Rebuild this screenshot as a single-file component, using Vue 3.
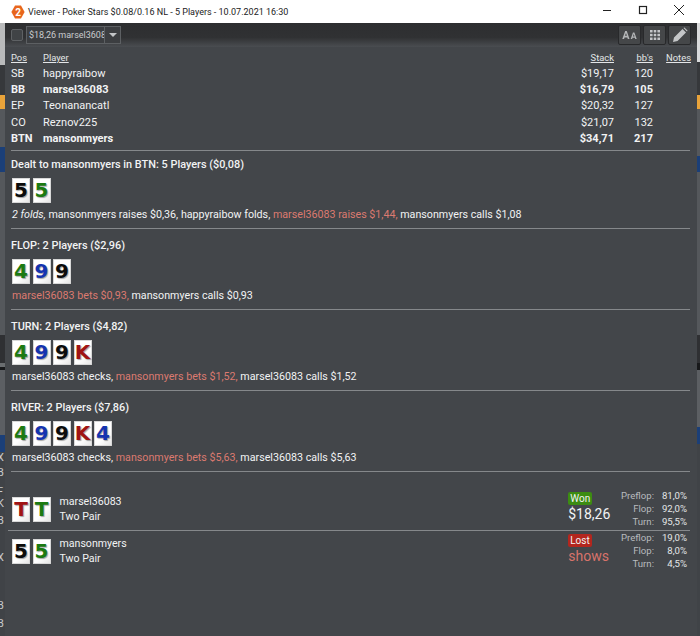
<template>
  <div class="screen">
    <header class="titlebar">
      <svg class="app-icon" width="14" height="14" viewBox="0 0 14 14">
        <path d="M4 .5h6L13.6 7 10 13.5H4L.4 7z" fill="#e8661c" />
        <text x="7" y="10.5" text-anchor="middle" class="app-icon-num">2</text>
      </svg>
      <span class="title">Viewer - Poker Stars $0.08/0.16 NL - 5 Players - 10.07.2021 16:30</span>
      <div class="win-controls">
        <svg width="36" height="12" viewBox="0 0 36 12"><path d="M14 6.500h8" stroke="#222" fill="none" /></svg>
        <svg width="36" height="12" viewBox="0 0 36 12"><rect x="14.500" y="2.500" width="7" height="7" stroke="#222" stroke-width="1.200" fill="none" /></svg>
        <svg width="36" height="12" viewBox="0 0 36 12"><path d="M13 1l10 10M23 1L13 11" stroke="#222" fill="none" /></svg>
      </div>
    </header>

    <div class="desk">
      <div class="strip strip-left">
        <div v-for="(b, i) in leftBands" :key="i" class="band" :style="{ height: b.h + 'px', background: b.c }">{{ b.t }}</div>
      </div>

      <main class="viewer">
        <div class="toolbar">
          <span class="check"></span>
          <div class="combo">
            <span class="combo-text">$18,26 marsel3608</span>
            <span class="combo-arrow"><i></i></span>
          </div>
          <div class="tools">
            <button class="tool">
              <svg width="15" height="8" viewBox="0 0 18 10"><path d="M0 10L3.600 0h2L9 10H6.900l-.6-2H2.800l-.6 2zM3.400 6h2.400L4.600 2.400zM10.500 10l2.800-8h1.800l2.900 8h-1.800l-.5-1.600h-2.900L12.300 10zM13.300 7h2L14.300 3.800z" fill="#b4b6b8" fill-rule="evenodd" /></svg>
            </button>
            <button class="tool">
              <svg width="10" height="10" viewBox="0 0 10 10" fill="#c4c6c8">
                <path d="M0 0h2.600v2.600H0zM3.700 0h2.600v2.600H3.700zM7.400 0H10v2.600H7.400zM0 3.700h2.600v2.600H0zM3.700 3.700h2.600v2.600H3.700zM7.400 3.700H10v2.600H7.400zM0 7.400h2.600V10H0zM3.700 7.400h2.600V10H3.700zM7.400 7.400H10V10H7.400z" />
              </svg>
            </button>
            <button class="tool">
              <svg width="16" height="16" viewBox="0 0 16 16"><path d="M1 15l1-4.500L10.500 2l3.500 3.500L5.500 14zM11.500 1l1-.5 3 3-.5 1z" fill="#c4c6c8" /></svg>
            </button>
          </div>
        </div>

        <div class="content">
          <div class="players">
            <div class="row head">
              <u>Pos</u><u>Player</u><u class="num">Stack</u><u class="num">bb's</u><u class="num">Notes</u>
            </div>
            <div v-for="p in players" :key="p.pos" class="row" :class="{ strong: p.strong }">
              <span>{{ p.pos }}</span><span>{{ p.name }}</span><span class="num">{{ p.stack }}</span><span class="num">{{ p.bb }}</span><span></span>
            </div>
          </div>

          <section v-for="s in streets" :key="s.title" class="street">
            <h3>{{ s.title }}</h3>
            <div class="cards">
              <span v-for="(c, i) in s.cards" :key="i" class="card" :class="c.s">{{ c.r }}</span>
            </div>
            <p class="actions">
              <template v-for="(a, i) in s.actions" :key="i"><span :class="a.k">{{ a.t }}</span>{{ ' ' }}</template>
            </p>
          </section>

          <div class="results">
            <div v-for="r in results" :key="r.name" class="result">
              <div class="cards">
                <span v-for="(c, i) in r.cards" :key="i" class="card" :class="c.s">{{ c.r }}</span>
              </div>
              <div class="who">
                <div>{{ r.name }}</div>
                <div>{{ r.hand }}</div>
              </div>
              <div class="outcome" :class="r.won ? 'won' : 'lost'">
                <span class="badge">{{ r.won ? 'Won' : 'Lost' }}</span>
                <span class="amount">{{ r.amount }}</span>
              </div>
              <div class="equity">
                <template v-for="e in r.equity" :key="e.l">
                  <span class="eq-label">{{ e.l }}:</span><span class="eq-val">{{ e.v }}</span>
                </template>
              </div>
            </div>
          </div>
        </div>
      </main>

      <div class="strip strip-right">
        <div v-for="(b, i) in rightBands" :key="i" class="band" :style="{ height: b.h + 'px', background: b.c }"></div>
      </div>
    </div>
  </div>
</template>

<script setup>
const card = (r, s) => ({ r, s })
const flop = [card('4', 'green'), card('9', 'blue'), card('9', 'black')]
const turn = [...flop, card('K', 'red')]
const river = [...turn, card('4', 'blue')]

const players = [
  { pos: 'SB', name: 'happyraibow', stack: '$19,17', bb: '120' },
  { pos: 'BB', name: 'marsel36083', stack: '$16,79', bb: '105', strong: true },
  { pos: 'EP', name: 'Teonanancatl', stack: '$20,32', bb: '127' },
  { pos: 'CO', name: 'Reznov225', stack: '$21,07', bb: '132' },
  { pos: 'BTN', name: 'mansonmyers', stack: '$34,71', bb: '217', strong: true },
]

const streets = [
  {
    title: 'Dealt to mansonmyers in BTN: 5 Players ($0,08)',
    cards: [card('5', 'black'), card('5', 'green')],
    actions: [
      { t: '2 folds,', k: 'folds' },
      { t: 'mansonmyers raises $0,36,' },
      { t: 'happyraibow folds,' },
      { t: 'marsel36083 raises $1,44,', k: 'hero' },
      { t: 'mansonmyers calls $1,08' },
    ],
  },
  {
    title: 'FLOP: 2 Players ($2,96)',
    cards: flop,
    actions: [
      { t: 'marsel36083 bets $0,93,', k: 'hero' },
      { t: 'mansonmyers calls $0,93' },
    ],
  },
  {
    title: 'TURN: 2 Players ($4,82)',
    cards: turn,
    actions: [
      { t: 'marsel36083 checks,' },
      { t: 'mansonmyers bets $1,52,', k: 'hero' },
      { t: 'marsel36083 calls $1,52' },
    ],
  },
  {
    title: 'RIVER: 2 Players ($7,86)',
    cards: river,
    actions: [
      { t: 'marsel36083 checks,' },
      { t: 'mansonmyers bets $5,63,', k: 'hero' },
      { t: 'marsel36083 calls $5,63' },
    ],
  },
]

const results = [
  {
    name: 'marsel36083',
    hand: 'Two Pair',
    won: true,
    amount: '$18,26',
    cards: [card('T', 'red'), card('T', 'green')],
    equity: [
      { l: 'Preflop', v: '81,0%' },
      { l: 'Flop', v: '92,0%' },
      { l: 'Turn', v: '95,5%' },
    ],
  },
  {
    name: 'mansonmyers',
    hand: 'Two Pair',
    won: false,
    amount: 'shows',
    cards: [card('5', 'black'), card('5', 'green')],
    equity: [
      { l: 'Preflop', v: '19,0%' },
      { l: 'Flop', v: '8,0%' },
      { l: 'Turn', v: '4,5%' },
    ],
  },
]

// what shows of the windows behind the viewer, top to bottom
const leftBands = [
  { h: 42, c: '#b9babb' },
  { h: 30, c: '#36383b' },
  { h: 14, c: '#e9a33a' },
  { h: 38, c: '#55585c' },
  { h: 25, c: '#1b3f78' },
  { h: 163, c: '#55585c' },
  { h: 28, c: '#2f3033' },
  { h: 4, c: '#6a6d70' },
  { h: 3, c: '#18191b' },
  { h: 65, c: '#5c5f63' },
  { h: 17, c: '#1b3f78' },
  { h: 15, c: '#404347', t: 'X' },
  { h: 19, c: '#404347', t: 'B' },
  { h: 12, c: '#404347', t: 'F' },
  { h: 17, c: '#404347', t: 'K' },
  { h: 37, c: '#404347', t: 'B' },
  { h: 48, c: '#404347', t: 'X' },
  { h: 18, c: '#404347', t: 'B' },
  { h: 18, c: '#404347', t: 'B' },
]

const rightBands = [
  { h: 39, c: '#d9dadb' },
  { h: 33, c: '#36383b' },
  { h: 14, c: '#e9a33a' },
  { h: 47, c: '#55585c' },
  { h: 16, c: '#1b3f78' },
  { h: 163, c: '#55585c' },
  { h: 28, c: '#2f3033' },
  { h: 7, c: '#18191b' },
  { h: 57, c: '#5c5f63' },
  { h: 17, c: '#1b3f78' },
  { h: 192, c: '#404347' },
]
</script>

<style scoped>
.screen {
  width: 700px;
  height: 636px;
  overflow: hidden;
  display: flex;
  flex-direction: column;
  font-family: Roboto, "Open Sans", sans-serif;
  font-size: 11px;
  color: #f2f3f4;
}

.titlebar {
  height: 23px;
  flex: none;
  background: #fff;
  color: #222;
  display: flex;
  align-items: center;
  padding-left: 11px;
  font-size: 9px;
}

.app-icon {
  margin-right: 3px;
}

.app-icon-num {
  font-size: 10px;
  font-weight: 700;
  fill: #fff;
}

.win-controls {
  margin-left: auto;
  margin-right: 3px;
  margin-bottom: 3px;
  display: flex;
}

.desk {
  flex: 1;
  display: flex;
  min-height: 0;
}

.strip {
  flex: none;
  overflow: hidden;
}

.strip-left {
  width: 5px;
}

.strip-right {
  width: 3px;
}

.band {
  font-size: 11px;
  line-height: 12px;
  color: #c8cacc;
  text-indent: -3px;
  overflow: hidden;
}

.viewer {
  flex: 1;
  min-width: 0;
  display: flex;
  flex-direction: column;
  background: #43464a;
}

.toolbar {
  height: 24px;
  flex: none;
  display: flex;
  align-items: center;
  padding: 0 6px;
  background: linear-gradient(#2d2e30, #303133 60%, #4a4d51);
}

.check {
  width: 10px;
  height: 10px;
  border: 1px solid #5e6164;
  border-radius: 2px;
  background: #404346;
}

.combo {
  margin-left: 3px;
  width: 95px;
  height: 18px;
  display: flex;
  border: 1px solid #5d6063;
  box-sizing: border-box;
  background: #3c3e41;
}

.combo-text {
  flex: 1;
  min-width: 0;
  overflow: hidden;
  white-space: nowrap;
  line-height: 16px;
  padding-left: 2px;
  font-size: 9px;
  color: #c9cbcd;
}

.combo-arrow {
  width: 15px;
  border-left: 1px solid #5d6063;
  display: flex;
  align-items: center;
  justify-content: center;
}

.combo-arrow i {
  border: 4px solid transparent;
  border-top: 4px solid #c4c6c8;
  border-bottom: 0;
}

.tools {
  margin-left: auto;
  display: flex;
  gap: 2px;
}

.tool {
  width: 23px;
  height: 20px;
  padding: 0;
  display: flex;
  align-items: center;
  justify-content: center;
  border: 1px solid #28292b;
  border-radius: 2px;
  background: #454749;
}

.content {
  flex: 1;
  padding: 3px 6px 0;
}

.players {
  padding-bottom: 3px;
}

.row {
  display: grid;
  grid-template-columns: 32px 1fr 60px 39px 38px;
  height: 16.2px;
  line-height: 16px;
  white-space: nowrap;
}

.row.head {
  font-size: 9.4px;
  height: 16px;
  line-height: 15px;
  color: #e4e6e8;
}

.row.strong {
  font-weight: 700;
}

.num {
  text-align: right;
}

.street {
  border-top: 1px solid #85888b;
  margin-right: 1px;
  height: 71px;
  padding-top: 9px;
}

.street:first-of-type {
  padding-top: 6px;
}

.street h3 {
  margin: 0;
  font-size: 10.9px;
  font-weight: 500;
  line-height: 15px;
}

.cards {
  display: flex;
  gap: 2.5px;
}

.street .cards {
  margin-top: 6px;
  margin-left: 1px;
}

.card {
  width: 18px;
  height: 25px;
  display: block;
  text-align: center;
  font-family: "DejaVu Sans", sans-serif;
  font-weight: 700;
  font-size: 20px;
  line-height: 25px;
  background: linear-gradient(135deg, #fff 60%, #e2e2e2);
  box-shadow: inset 0 0 0 1px #d8d8d8;
  text-shadow: 1px 1px 1px rgba(0, 0, 0, 0.35);
  border-radius: 1px;
}

.card.black { color: #0c0c0c; }
.card.green { color: #1c7a12; }
.card.blue { color: #1434b0; }
.card.red { color: #a01414; }

.actions {
  margin: 4px 0 0 1px;
  font-size: 10.7px;
  line-height: 15px;
  white-space: nowrap;
}

.folds {
  font-style: italic;
}

.hero {
  color: #dc7a70;
}

.results {
  border-top: 1px solid #85888b;
  margin-right: 1px;
  padding-top: 17px;
}

.result {
  display: flex;
  height: 41px;
  margin-left: -3px;
  padding-left: 4px;
  box-sizing: border-box;
  padding-top: 8px;
}

.result + .result {
  border-top: 1px solid #85888b;
}

.who {
  margin-left: 9px;
  font-size: 10.6px;
  line-height: 15px;
  width: 511px;
  margin-top: -3px;
}

.outcome {
  display: flex;
  flex-direction: column;
  align-items: flex-start;
  width: 50px;
  margin-top: -5px;
}

.badge {
  font-size: 10px;
  line-height: 13px;
  padding: 0 2px;
  border-radius: 2px;
}

.won .badge {
  background: #3c8c12;
}

.lost .badge {
  background: #b3261e;
}

.amount {
  font-size: 14px;
  line-height: 19px;
}

.lost .amount {
  color: #d8736a;
}

.equity {
  display: grid;
  grid-template-columns: 36px 33px;
  justify-items: end;
  align-self: flex-start;
  font-size: 9.6px;
  line-height: 13px;
  margin: -8px 3px 0 auto;
}

.eq-label {
  color: #b8bbbe;
}

.eq-val {
  color: #e4e6e8;
}
</style>
